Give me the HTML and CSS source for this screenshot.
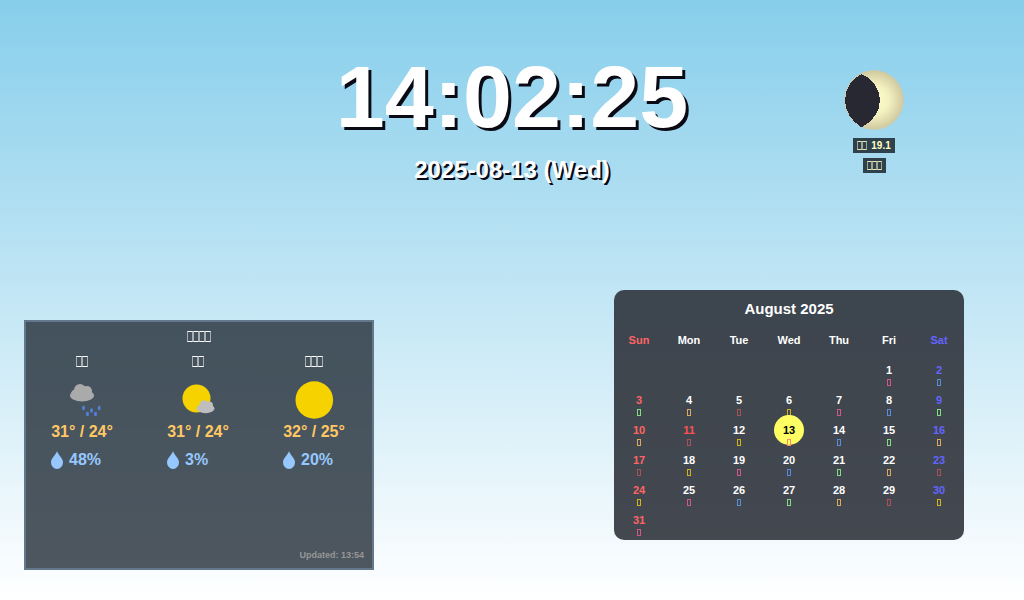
FILE: index.html
```html
<!DOCTYPE html>
<html lang="en">
<head>
<meta charset="utf-8">
<title>Clock</title>
<link rel="stylesheet" href="styles.css">
</head>
<body>
<header class="top">
  <div class="clock">
    <time class="time">14:02:25</time>
    <time class="date" datetime="2025-08-13">2025-08-13 (Wed)</time>
  </div>
  <div class="moon">
    <svg class="moon-disc" viewBox="0 0 60 60" width="60" height="60">
      <defs>
        <radialGradient id="glow"><stop offset="0" stop-color="#ffffcc"/><stop offset=".5" stop-color="#f4f1c0"/><stop offset="1" stop-color="#d0c8a0"/></radialGradient>
      </defs>
      <circle cx="30" cy="30" r="29.7" fill="url(#glow)"/>
      <path d="M17.500 4C8 9 1 18 1 30S8 50.500 16 56.500H19C29 51 36 41 36 30S28 8 17.500 4Z" fill="#282832" shape-rendering="crispEdges"/>
    </svg>
    <p class="tag"><span class="boxes small"><i></i><i></i></span>19.1</p>
    <p class="tag"><span class="boxes small"><i></i><i></i><i></i></span></p>
  </div>
</header>
<main class="panels">
  <section class="weather">
    <h2 class="weather-title"><span class="boxes"><i></i><i></i><i></i><i></i></span></h2>
    <div class="days">
      <article class="day">
        <h3 class="day-name"><span class="boxes"><i></i><i></i></span></h3>
        <svg class="sky" viewBox="0 0 40 40" width="40" height="40">
          <g fill="#aaaaaa"><ellipse cx="20" cy="15.500" rx="12" ry="6"/><circle cx="18" cy="10" r="6"/><circle cx="25" cy="11" r="5"/><circle cx="13.500" cy="14" r="4.500"/></g>
          <g fill="#5082dc"><ellipse cx="21.500" cy="28" rx="1.500" ry="2.200"/><ellipse cx="29.500" cy="30.500" rx="1.500" ry="2.200"/><ellipse cx="37.200" cy="28" rx="1.500" ry="2.200"/><ellipse cx="25.500" cy="34" rx="1.500" ry="2.200"/><ellipse cx="33.500" cy="34" rx="1.500" ry="2.200"/></g>
        </svg>
        <p class="temp">31° / 24°</p>
        <p class="rain"><svg class="drop" viewBox="0 0 12 18" width="12" height="18"><path d="M6 0C7 4 12 7 12 11.500A6 6.500 0 0 1 0 11.500C0 7 5 4 6 0Z"/></svg>48%</p>
      </article>
      <article class="day">
        <h3 class="day-name"><span class="boxes"><i></i><i></i></span></h3>
        <svg class="sky" viewBox="0 0 40 40" width="40" height="40">
          <circle cx="18.500" cy="18.500" r="14" fill="#f5d200"/>
          <g fill="#bebebe"><ellipse cx="27.500" cy="28.500" rx="9" ry="4.700"/><circle cx="26" cy="24.500" r="4.300"/><circle cx="31" cy="25.500" r="4"/></g>
        </svg>
        <p class="temp">31° / 24°</p>
        <p class="rain"><svg class="drop" viewBox="0 0 12 18" width="12" height="18"><path d="M6 0C7 4 12 7 12 11.500A6 6.500 0 0 1 0 11.500C0 7 5 4 6 0Z"/></svg>3%</p>
      </article>
      <article class="day">
        <h3 class="day-name"><span class="boxes"><i></i><i></i><i></i></span></h3>
        <svg class="sky" viewBox="0 0 40 40" width="40" height="40"><circle cx="20.300" cy="20" r="18.800" fill="#f5d200"/></svg>
        <p class="temp">32° / 25°</p>
        <p class="rain"><svg class="drop" viewBox="0 0 12 18" width="12" height="18"><path d="M6 0C7 4 12 7 12 11.500A6 6.500 0 0 1 0 11.500C0 7 5 4 6 0Z"/></svg>20%</p>
      </article>
    </div>
    <p class="updated">Updated: 13:54</p>
  </section>
  <section class="calendar">
    <h2 class="month">August 2025</h2>
    <table class="grid">
      <thead><tr><th class="sun">Sun</th><th>Mon</th><th>Tue</th><th>Wed</th><th>Thu</th><th>Fri</th><th class="sat">Sat</th></tr></thead>
      <tbody>
        <tr><td></td><td></td><td></td><td></td><td></td><td class="pink">1</td><td class="sat blue">2</td></tr>
        <tr><td class="sun green">3</td><td class="orange">4</td><td class="brick">5</td><td class="gold">6</td><td class="pink">7</td><td class="blue">8</td><td class="sat green">9</td></tr>
        <tr><td class="sun orange">10</td><td class="holiday brick">11</td><td class="gold">12</td><td class="today"><span class="today-mark">13</span></td><td class="blue">14</td><td class="green">15</td><td class="sat orange">16</td></tr>
        <tr><td class="sun brick">17</td><td class="gold">18</td><td class="pink">19</td><td class="blue">20</td><td class="green">21</td><td class="orange">22</td><td class="sat brick">23</td></tr>
        <tr><td class="sun gold">24</td><td class="pink">25</td><td class="blue">26</td><td class="green">27</td><td class="orange">28</td><td class="brick">29</td><td class="sat gold">30</td></tr>
        <tr><td class="sun pink">31</td><td></td><td></td><td></td><td></td><td></td><td></td></tr>
      </tbody>
    </table>
  </section>
</main>
</body>
</html>
```
FILE: styles.css
```css
*, *::before, *::after { box-sizing: border-box; }
body {
  margin: 0;
  min-height: 100vh;
  display: flex;
  flex-direction: column;
  justify-content: space-between;
  background: linear-gradient(#87ceeb, #ffffff) no-repeat;
  font-family: "Liberation Sans", Arial, sans-serif;
  font-weight: bold;
  color: #ffffff;
}
h2, h3, p { margin: 0; font: inherit; }

.top {
  display: grid;
  grid-template-columns: 1fr auto 1fr;
  padding-top: 47px;
}
.clock {
  grid-column: 2;
  display: flex;
  flex-direction: column;
  align-items: center;
}
.time {
  font-size: 88px;
  line-height: 100px;
  text-shadow: 3px 3px #0a0a14;
}
.date {
  margin-top: 9px;
  font-size: 24px;
  line-height: 28px;
  text-shadow: 2px 2px #0a0a14;
}
.moon {
  justify-self: end;
  margin: 23px 120px 0 0;
  width: 60px;
  display: flex;
  flex-direction: column;
  align-items: center;
  gap: 5px;
}
.moon-disc { margin-bottom: 3px; }
.tag {
  display: flex;
  align-items: center;
  gap: 4px;
  height: 15px;
  padding: 0 4px;
  background: #2f414a;
  color: #ffffc8;
  font-size: 10px;
}

.boxes { display: inline-flex; color: #ffffff; }
.boxes i {
  width: 6px;
  height: 11px;
  border: 1px solid;
  border-left-color: #a8aeb2;
  border-right-color: #a8aeb2;
}
.boxes.small { color: #e8e8bc; }
.boxes.small i {
  width: 5px;
  height: 9px;
  border-left-color: #a0a68c;
  border-right-color: #a0a68c;
}

.panels {
  display: flex;
  justify-content: space-between;
  align-items: flex-end;
  padding: 0 60px 30px 24px;
}
.weather {
  width: 350px;
  min-height: 250px;
  display: flex;
  flex-direction: column;
  padding: 11px 0 10px;
  outline: 2px solid #64788c;
  outline-offset: -2px;
  background: rgba(30, 40, 50, .78);
}
.weather-title, .day-name { display: flex; justify-content: center; }
.days {
  display: grid;
  grid-template-columns: repeat(3, 116px);
  margin-top: 14px;
}
.day { display: flex; flex-direction: column; align-items: center; }
.sky { margin-top: 13px; }
.temp {
  margin-top: 2px;
  font-size: 16px;
  line-height: 20px;
  color: #ffc864;
}
.rain {
  align-self: stretch;
  display: flex;
  align-items: center;
  gap: 6px;
  margin-top: 8px;
  padding-left: 27px;
  font-size: 16px;
  line-height: 20px;
  color: #96c8ff;
}
.drop { fill: #96c8ff; }
.updated {
  margin-top: auto;
  padding-right: 10px;
  text-align: right;
  font-size: 9px;
  line-height: 10px;
  color: #969696;
}

.calendar {
  width: 350px;
  margin-bottom: 30px;
  padding: 9px 0 4px;
  border-radius: 10px;
  background: rgba(38, 42, 50, .86);
}
.month {
  text-align: center;
  font-size: 15px;
  line-height: 20px;
}
.grid {
  width: 100%;
  table-layout: fixed;
  border-collapse: collapse;
  margin-top: 7px;
  text-align: center;
  font-size: 11px;
  line-height: 14px;
}
.grid th { height: 30px; padding: 0 0 2px; }
.grid td { height: 30px; padding: 7px 0 0; vertical-align: top; }
.grid td[class]::after {
  content: "";
  display: block;
  width: 4px;
  height: 7px;
  margin: 2px auto 0;
  border: 1px solid var(--box);
}
.sun { color: #ff6464; }
.holiday { color: #ff5050; }
.sat { color: #6464ff; }
.pink { --box: #d2558c; }
.blue { --box: #5a8cdc; }
.green { --box: #82dc82; }
.orange { --box: #dcaa5f; }
.brick { --box: #aa5058; }
.gold { --box: #d2b414; }
.today { --box: #ff8c64; }
.grid .today::after { position: relative; }
.today-mark {
  position: relative;
  z-index: 0;
  color: #000000;
}
.today-mark::before {
  content: "";
  position: absolute;
  z-index: -1;
  left: 50%;
  top: 50%;
  width: 30px;
  height: 30px;
  border-radius: 50%;
  background: #ffff64;
  transform: translate(-50%, -50%);
}
```
